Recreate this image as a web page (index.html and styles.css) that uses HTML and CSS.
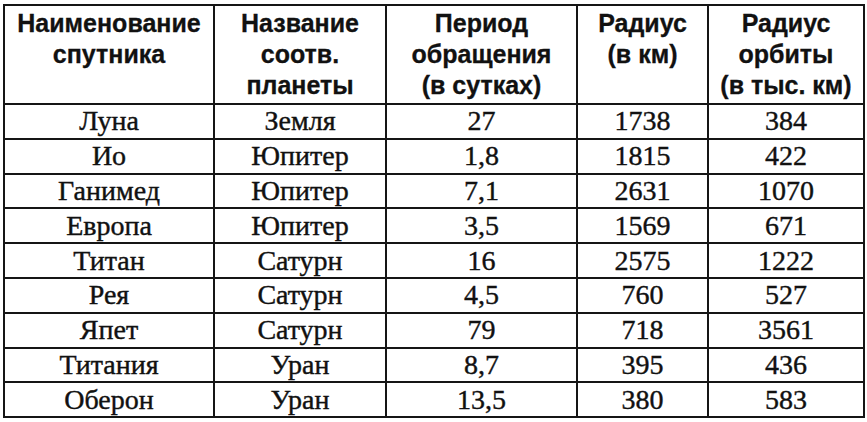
FILE: index.html
```html
<!DOCTYPE html>
<html lang="ru">
<head>
<meta charset="utf-8">
<title>Спутники планет</title>
<link rel="stylesheet" href="styles.css">
</head>
<body>
<table class="sat-table">
  <colgroup>
    <col class="c1"><col class="c2"><col class="c3"><col class="c4"><col class="c5">
  </colgroup>
  <thead>
    <tr>
      <th>Наименование<br>спутника</th>
      <th>Название<br>соотв.<br>планеты</th>
      <th>Период<br>обращения<br>(в сутках)</th>
      <th>Радиус<br>(в км)</th>
      <th>Радиус<br>орбиты<br>(в тыс. км)</th>
    </tr>
  </thead>
  <tbody>
    <tr><td>Луна</td><td>Земля</td><td>27</td><td>1738</td><td>384</td></tr>
    <tr><td>Ио</td><td>Юпитер</td><td>1,8</td><td>1815</td><td>422</td></tr>
    <tr><td>Ганимед</td><td>Юпитер</td><td>7,1</td><td>2631</td><td>1070</td></tr>
    <tr><td>Европа</td><td>Юпитер</td><td>3,5</td><td>1569</td><td>671</td></tr>
    <tr><td>Титан</td><td>Сатурн</td><td>16</td><td>2575</td><td>1222</td></tr>
    <tr><td>Рея</td><td>Сатурн</td><td>4,5</td><td>760</td><td>527</td></tr>
    <tr><td>Япет</td><td>Сатурн</td><td>79</td><td>718</td><td>3561</td></tr>
    <tr><td>Титания</td><td>Уран</td><td>8,7</td><td>395</td><td>436</td></tr>
    <tr><td>Оберон</td><td>Уран</td><td>13,5</td><td>380</td><td>583</td></tr>
  </tbody>
</table>
</body>
</html>
```

FILE: styles.css
```css
html, body {
  margin: 0;
  padding: 0;
  background: #ffffff;
}

body {
  padding: 4px 0 0 3px;
  color: #111111;
}

.sat-table {
  border-collapse: collapse;
  table-layout: fixed;
  width: 860px;
  border: 2px solid #151515;
}

.c1 { width: 210px; }
.c2 { width: 172px; }
.c3 { width: 191px; }
.c4 { width: 131px; }
.c5 { width: 156px; }

.sat-table th,
.sat-table td {
  border: 2px solid #151515;
  padding: 0;
  text-align: center;
}

.sat-table th {
  font-family: "Liberation Sans", Arial, sans-serif;
  font-weight: bold;
  font-size: 25px;
  line-height: 31px;
  vertical-align: top;
  padding: 2px 0 0;
  height: 99px;
  box-sizing: border-box;
  -webkit-text-stroke: 0.3px #111111;
}

.sat-table td {
  font-family: "Liberation Serif", "Times New Roman", serif;
  font-size: 28px;
  line-height: 30px;
  height: 32.8px;
  vertical-align: middle;
  -webkit-text-stroke: 0.4px #111111;
}
```
